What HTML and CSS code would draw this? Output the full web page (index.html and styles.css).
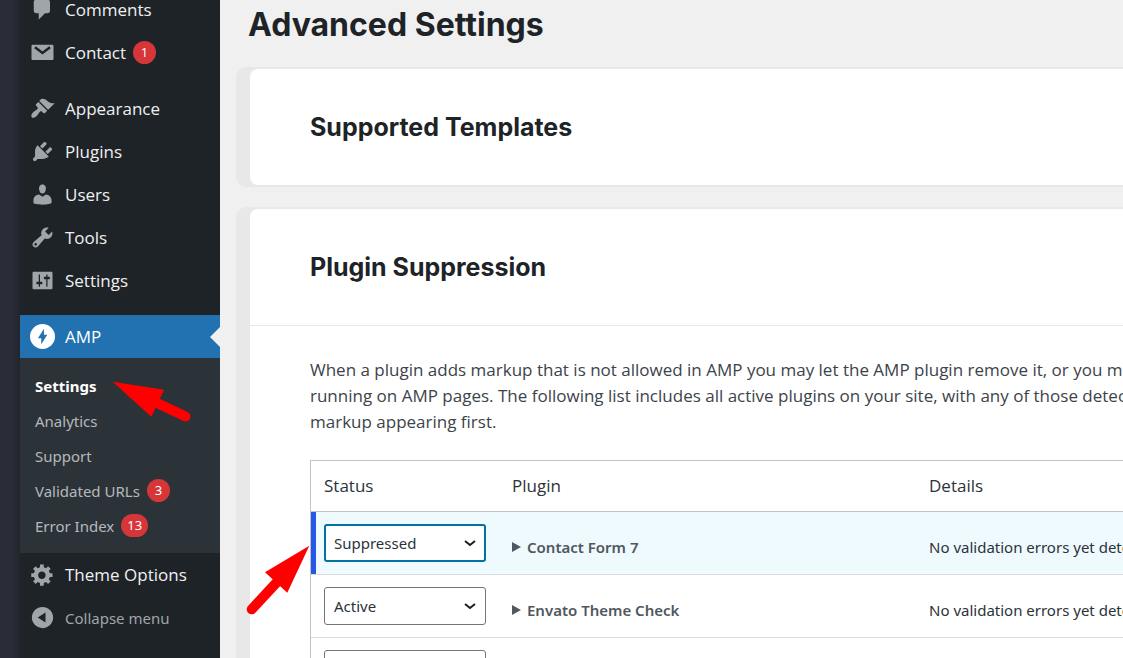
FILE: index.html
```html
<!DOCTYPE html>
<html lang="en">
<head>
<meta charset="utf-8">
<title>AMP Settings</title>
<link rel="stylesheet" href="styles.css">
</head>
<body>
<div class="page">
  <nav class="sidebar" aria-label="Main menu">
    <ul class="menu">
      <li><a class="menu-link" href="#"><svg class="icon" viewBox="0 0 20 20"><path d="M5 2h9c1.100 0 2 .9 2 2v7c0 1.100-.9 2-2 2h-2l-5 5v-5H5c-1.100 0-2-.9-2-2V4c0-1.100.9-2 2-2z"/></svg>Comments</a></li>
      <li><a class="menu-link" href="#"><svg class="icon" viewBox="0 0 20 20"><path d="M2.200 3.700h15.600c.6 0 1 .4 1 1v10.200c0 .6-.4 1-1 1H2.200c-.6 0-1-.4-1-1V4.700c0-.6.4-1 1-1z"/><path class="cut-line" d="M4 5.800l6 4.600L16 5.800"/></svg>Contact <span class="badge">1</span></a></li>
      <li class="group-start"><a class="menu-link" href="#"><svg class="icon" viewBox="0 0 20 20"><path d="M14.480 11.060L7.410 3.990l1.500-1.500c.5-.56 2.300-.47 3.510.32 1.210.8 1.430 1.280 2.910 2.100 1.180.64 2.450 1.260 4.450.85zm-.71.71L6.700 4.700 4.930 6.470c-.39.39-.39 1.020 0 1.410l1.060 1.060c.39.39.39 1.030 0 1.420-.6.6-1.430 1.110-2.210 1.690-.35.26-.7.53-1.010.84C1.430 14.230.4 16.080 1.400 17.070c.99 1 2.840-.03 4.180-1.360.31-.31.58-.66.85-1.020.57-.78 1.080-1.610 1.690-2.210.39-.39 1.020-.39 1.410 0l1.060 1.060c.39.39 1.020.39 1.410 0z"/></svg>Appearance</a></li>
      <li><a class="menu-link" href="#"><svg class="icon" viewBox="0 0 20 20"><path d="M13.110 4.360L9.870 7.600 8 5.730l3.240-3.240c.35-.34 1.050-.2 1.560.32.52.51.66 1.210.31 1.550zm-8 1.770l.91-1.120 9.010 9.010-1.190.84c-.71.71-2.630 1.160-3.820 1.160H6.140L4.900 17.260c-.59.59-1.540.59-2.120 0-.59-.58-.59-1.530 0-2.120l1.240-1.240v-3.880c0-1.130.4-3.190 1.090-3.890zm7.260 3.970l3.240-3.240c.34-.35 1.040-.21 1.550.31.52.51.66 1.210.31 1.550l-3.240 3.250z"/></svg>Plugins</a></li>
      <li><a class="menu-link" href="#"><svg class="icon" viewBox="0 0 20 20"><path d="M10 9.250c-2.270 0-2.730-3.440-2.730-3.440C7 4.020 7.820 2 9.970 2c2.160 0 2.980 2.020 2.710 3.810 0 0-.41 3.440-2.680 3.440zm0 2.570L12.720 10c2.390 0 4.520 2.330 4.520 4.530v2.490s-3.650 1.130-7.240 1.130c-3.650 0-7.240-1.130-7.240-1.130v-2.490c0-2.250 1.940-4.480 4.470-4.480z"/></svg>Users</a></li>
      <li><a class="menu-link" href="#"><svg class="icon" viewBox="0 0 20 20"><path d="M16.680 9.770c-1.340 1.340-3.300 1.670-4.950.99l-5.410 6.520c-.99.99-2.590.99-3.580 0s-.99-2.590 0-3.570l6.520-5.420c-.68-1.650-.35-3.610.99-4.950 1.280-1.280 3.120-1.620 4.720-1.060l-2.890 2.890 2.820 2.820 2.860-2.870c.53 1.580.18 3.390-1.080 4.650zM3.810 16.210c.4.39 1.040.39 1.430 0 .4-.4.4-1.040 0-1.430-.39-.4-1.030-.4-1.430 0-.39.39-.39 1.030 0 1.430z"/></svg>Tools</a></li>
      <li><a class="menu-link" href="#"><svg class="icon" viewBox="0 0 20 20"><path d="M18 16V4c0-.55-.45-1-1-1H3c-.55 0-1 .45-1 1v12c0 .55.45 1 1 1h14c.55 0 1-.45 1-1zM8 11h1c.55 0 1 .45 1 1s-.45 1-1 1H8v1.500c0 .28-.22.5-.5.5s-.5-.22-.5-.5V13H6c-.55 0-1-.45-1-1s.45-1 1-1h1V5.500c0-.28.22-.5.5-.5s.5.22.5.5V11zm5-2h-1c-.55 0-1-.45-1-1s.45-1 1-1h1V5.500c0-.28.22-.5.5-.5s.5.22.5.5V7h1c.55 0 1 .45 1 1s-.45 1-1 1h-1v5.500c0 .28-.22.5-.5.5s-.5-.22-.5-.5V9z"/></svg>Settings</a></li>
      <li class="group-start">
        <a class="menu-link current" href="#"><svg class="icon" viewBox="0 0 24 24"><circle cx="12" cy="12" r="12"/><path class="bolt" d="M13.400 4.600v5.600h3.200L10.800 19.400v-5.800H7.600z"/></svg>AMP</a>
        <ul class="submenu">
          <li><a class="submenu-link selected" href="#">Settings</a></li>
          <li><a class="submenu-link" href="#">Analytics</a></li>
          <li><a class="submenu-link" href="#">Support</a></li>
          <li><a class="submenu-link" href="#">Validated URLs <span class="badge">3</span></a></li>
          <li><a class="submenu-link" href="#">Error Index <span class="badge">13</span></a></li>
        </ul>
      </li>
      <li><a class="menu-link" href="#"><svg class="icon" viewBox="0 0 20 20"><path d="M18 12h-2.180c-.17.7-.44 1.350-.81 1.930l1.540 1.540-2.100 2.100-1.540-1.540c-.58.36-1.230.63-1.910.79V19H8v-2.180c-.68-.16-1.330-.43-1.910-.79l-1.540 1.540-2.120-2.120 1.540-1.540c-.36-.58-.63-1.230-.79-1.910H1V9.030h2.170c.16-.7.44-1.350.8-1.940L2.430 5.550l2.100-2.100 1.540 1.540c.58-.37 1.240-.64 1.930-.81V2h3v2.180c.68.16 1.330.43 1.910.79l1.540-1.540 2.120 2.120-1.540 1.540c.36.59.64 1.240.8 1.940H18V12zm-8.500 1.500c1.660 0 3-1.340 3-3s-1.340-3-3-3-3 1.340-3 3 1.340 3 3 3z"/></svg>Theme Options</a></li>
      <li><button class="menu-link collapse" type="button"><svg class="icon" viewBox="0 0 20 20"><path fill-rule="evenodd" d="M10 1.500a8.500 8.500 0 1 1 0 17 8.500 8.500 0 0 1 0-17zM12.400 6v8L6.200 10z"/></svg>Collapse menu</button></li>
    </ul>
  </nav>

  <main class="content">
    <h1 class="title">Advanced Settings</h1>
    <section class="card">
      <h2 class="card-title">Supported Templates</h2>
    </section>
    <section class="card">
      <h2 class="card-title">Plugin Suppression</h2>
      <div class="card-body">
        <p class="intro">When a plugin adds markup that is not allowed in AMP you may let the AMP plugin remove it, or you may<br>running on AMP pages. The following list includes all active plugins on your site, with any of those detected<br>markup appearing first.</p>
        <table class="plugins">
          <thead>
            <tr><th class="col-status" scope="col">Status</th><th class="col-plugin" scope="col">Plugin</th><th scope="col">Details</th></tr>
          </thead>
          <tbody>
            <tr class="suppressed">
              <td><div class="picker"><select class="focused" aria-label="Status of Contact Form 7"><option>Suppressed</option><option>Active</option></select><svg class="chevron" viewBox="0 0 12 12"><path d="M1 4l5 4 5-4"/></svg></div></td>
              <td><details><summary>Contact Form 7</summary></details></td>
              <td>No validation errors yet detected.</td>
            </tr>
            <tr>
              <td><div class="picker"><select aria-label="Status of Envato Theme Check"><option>Active</option><option>Suppressed</option></select><svg class="chevron" viewBox="0 0 12 12"><path d="M1 4l5 4 5-4"/></svg></div></td>
              <td><details><summary>Envato Theme Check</summary></details></td>
              <td>No validation errors yet detected.</td>
            </tr>
            <tr>
              <td><div class="picker"><select aria-label="Status"><option>Active</option><option>Suppressed</option></select></div></td>
              <td></td>
              <td></td>
            </tr>
          </tbody>
        </table>
      </div>
    </section>
  </main>

  <svg class="pointers" aria-hidden="true">
    <path d="M112.700 381.700L164 389.700L151.300 416.700z"/>
    <path class="shaft" d="M157 403L185.500 416.500"/>
    <path d="M309.300 545.700L265 572.300L287.300 592.700z"/>
    <path class="shaft" d="M278 581L251.700 609.300"/>
  </svg>
</div>
</body>
</html>
```
FILE: styles.css
```css
* {
  box-sizing: border-box;
}

body {
  margin: 0;
  font: 17px/26px "Open Sans", sans-serif;
  color: #3c434a;
  background: #f0f0f0;
}

ul {
  margin: 0;
  padding: 0;
  list-style: none;
}

.page {
  position: relative;
  display: flex;
  height: 100vh;
  overflow: hidden;
  padding-left: 20px;
  background: linear-gradient(90deg, #2a2d38 0, #2a2d38 12px, #22252c 20px, #f0f0f0 20px);
}

/* Sidebar */
.sidebar {
  flex: 0 0 200px;
  background: #1e2327;
}

.menu {
  margin-top: -12px;
}

.menu-link {
  display: flex;
  align-items: center;
  width: 100%;
  height: 43px;
  padding: 0 10px;
  border: 0;
  background: none;
  font: inherit;
  color: #f0f0f1;
  text-decoration: none;
  white-space: nowrap;
}

.icon {
  flex: none;
  width: 25px;
  height: 25px;
  margin-right: 10px;
  fill: #a0a5aa;
}

.cut-line {
  fill: none;
  stroke: #1e2327;
  stroke-width: 2;
}

.group-start {
  margin-top: 13px;
}

.current {
  position: relative;
  background: #2271b1;
  color: #fff;
}

.current::after {
  content: "";
  position: absolute;
  right: 0;
  top: 50%;
  margin-top: -10px;
  border: 10px solid transparent;
  border-left: 0;
  border-right-color: #f0f0f0;
}

.current .icon {
  fill: #fff;
}

.bolt {
  fill: #2271b1;
}

.collapse {
  font: 15px "Noto Sans", sans-serif;
  color: #a0a5aa;
}

.submenu {
  padding: 10px 0;
  background: #2c3338;
}

.submenu-link {
  display: flex;
  align-items: center;
  height: 35px;
  padding: 0 15px;
  font-family: "Noto Sans", sans-serif;
  font-size: 15px;
  color: #b4b9be;
  text-decoration: none;
}

.selected {
  font-weight: 700;
  color: #fff;
}

.badge {
  min-width: 23px;
  margin-left: 7px;
  padding: 0 6px;
  border-radius: 12px;
  background: #d63638;
  font-size: 13px;
  line-height: 23px;
  text-align: center;
  color: #fff;
}

/* Content */
.content {
  flex: 1;
  min-width: 0;
  padding-left: 16px;
}

.title,
.card-title {
  margin: 0;
  font-family: Inter, sans-serif;
  font-weight: 700;
  color: #1d2327;
}

.title {
  padding: 5px 12px 22px;
  font-size: 32px;
  line-height: 40px;
}

.card {
  margin-bottom: 20px;
  border: 2px solid #e8e8e8;
  border-width: 2px 0 2px 14px;
  border-radius: 10px 0 0 10px;
  background: #e8e8e8;
}

.card-title {
  padding: 40px 60px;
  border-top-left-radius: 8px;
  background: #fff;
  font-size: 25px;
  line-height: 36px;
}

.card > :last-child {
  border-bottom-left-radius: 8px;
}

.card-body {
  padding: 31px 0 60px 60px;
  border-top: 1px solid #e8e8e8;
  background: #fff;
}

.intro {
  margin: 0 0 25px;
  white-space: nowrap;
}

.plugins {
  width: 100%;
  border: 1px solid #c3c4c7;
  border-right: 0;
  border-spacing: 0;
  table-layout: fixed;
}

.plugins th {
  padding: 12px 13px;
  border-bottom: 1px solid #c3c4c7;
  font-weight: 400;
  text-align: left;
  color: #2c3338;
}

.col-status {
  width: 188px;
}

.col-plugin {
  width: 417px;
}

.plugins td {
  padding: 22px 13px 0;
  border-bottom: 1px solid #dcdcde;
  font-family: "Noto Sans", sans-serif;
  font-size: 15px;
  vertical-align: top;
  white-space: nowrap;
  color: #2c3338;
}

.plugins td:first-child {
  padding: 12px 13px;
}

.suppressed {
  background: #effaff;
}

.suppressed td:first-child {
  box-shadow: inset 5px 0 #2459e7;
}

.picker {
  position: relative;
}

.picker select {
  display: block;
  width: 100%;
  height: 38px;
  padding: 0 9px;
  border: 1px solid #757575;
  border-radius: 3px;
  background: #fff;
  font: inherit;
  color: #2c3338;
  appearance: none;
}

.picker .focused {
  padding: 0 8px;
  border: 2px solid #0071a1;
}

.chevron {
  position: absolute;
  right: 10px;
  top: 13px;
  width: 12px;
  height: 12px;
  fill: none;
  stroke: #1e1e1e;
  stroke-width: 2;
  pointer-events: none;
}

summary {
  display: flex;
  align-items: center;
  gap: 6px;
  font-weight: 600;
  color: #50575e;
}

summary::before {
  content: "";
  border: 5px solid transparent;
  border-right: 0;
  border-left: 9px solid #50575e;
}

/* Pointer arrows drawn over the page */
.pointers {
  position: absolute;
  left: 0;
  top: 0;
  width: 100%;
  height: 100%;
  fill: #f00;
  pointer-events: none;
}

.shaft {
  stroke: #f00;
  stroke-width: 10;
  stroke-linecap: round;
}
```
